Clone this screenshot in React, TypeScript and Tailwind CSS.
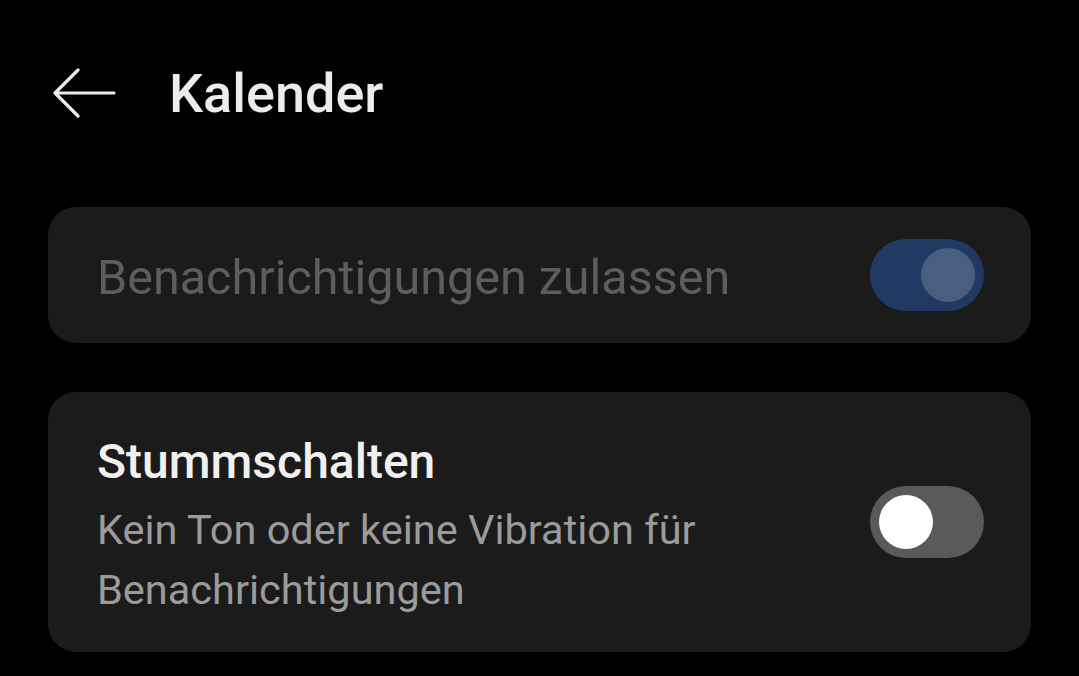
import React from "react";

function Toggle({ on }: { on: boolean }) {
  if (on) {
    return (
      <div className="flex h-[72px] w-[114px] shrink-0 items-center justify-end rounded-full bg-[#203a64] pr-[9px]">
        <div className="h-[54px] w-[54px] rounded-full bg-[#4a5e80]" />
      </div>
    );
  }
  return (
    <div className="flex h-[72px] w-[114px] shrink-0 items-center rounded-full bg-[#5a5a5a] pl-[9px]">
      <div className="h-[54px] w-[54px] rounded-full bg-white" />
    </div>
  );
}

export default function App() {
  return (
    <div
      className="h-[676px] w-[1079px] overflow-hidden bg-black"
      style={{ fontFamily: "Roboto, 'Noto Sans', sans-serif" }}
    >
      <header className="flex h-[186px] items-start pl-[52px] pt-[68px]">
        <svg width="64" height="52" viewBox="0 0 64 52" fill="none" className="shrink-0">
          <path d="M62 25H3M26 2L3 25L26 48" stroke="#ececec" strokeWidth="3.2" strokeLinecap="round" strokeLinejoin="round" />
        </svg>
        <h1 className="ml-[53px] -mt-[4px] text-[54px] font-medium leading-[60px] text-[#ececec]">
          Kalender
        </h1>
      </header>

      <main className="flex flex-col gap-[49px] px-[48px] pt-[21px]">
        <div className="flex h-[136px] items-center justify-between rounded-[28px] bg-[#1b1b1b] pl-[49px] pr-[47px]">
          <span className="pt-[5px] text-[48.5px] leading-[48px] text-[#5d5d5d]">
            Benachrichtigungen zulassen
          </span>
          <Toggle on />
        </div>

        <div className="flex h-[260px] items-center justify-between rounded-[28px] bg-[#1b1b1b] pl-[49px] pr-[47px]">
          <div className="flex flex-col self-start pt-[42px]">
            <span className="text-[48px] font-medium leading-[56px] text-[#f0f0f0]">
              Stummschalten
            </span>
            <span className="mt-[10px] text-[41.5px] leading-[60px] text-[#9b9b9b]">
              Kein Ton oder keine Vibration für
              <br />
              Benachrichtigungen
            </span>
          </div>
          <Toggle on={false} />
        </div>
      </main>
    </div>
  );
}
